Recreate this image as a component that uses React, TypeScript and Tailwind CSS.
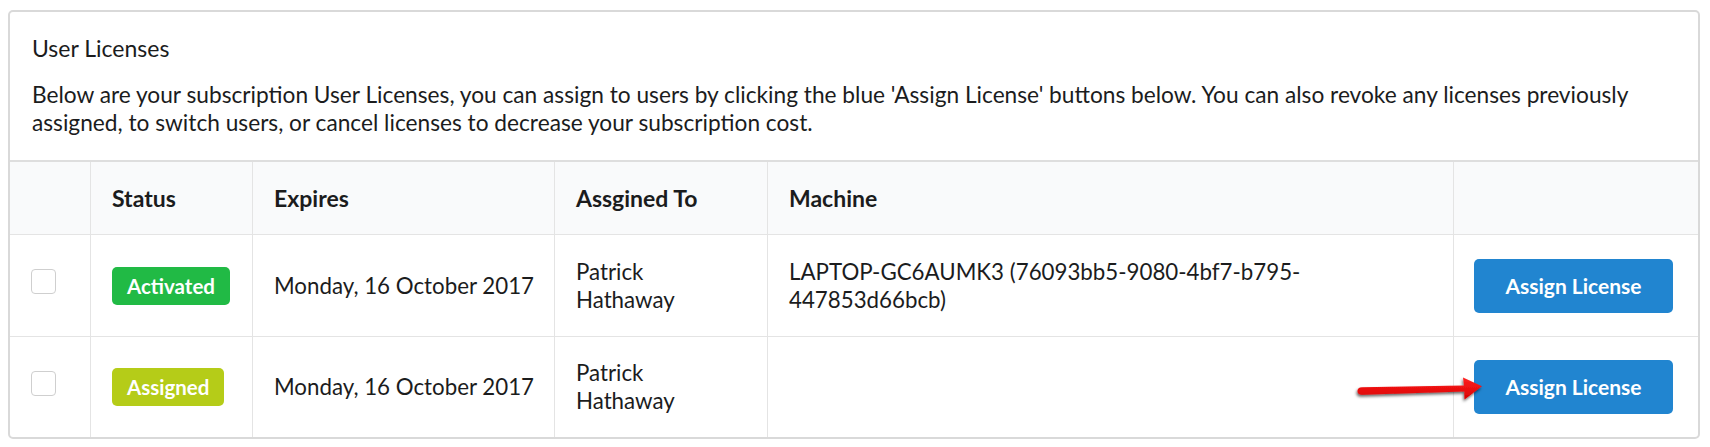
import React from 'react';

const rows = [
  {
    status: 'Activated',
    badge: 'bg-[#21ba45]',
    expires: 'Monday, 16 October 2017',
    user: 'Patrick Hathaway',
    machine: 'LAPTOP-GC6AUMK3 (76093bb5-9080-4bf7-b795-447853d66bcb)',
  },
  {
    status: 'Assigned',
    badge: 'bg-[#b5cc18]',
    expires: 'Monday, 16 October 2017',
    user: 'Patrick Hathaway',
    machine: '',
  },
];

function Checkbox() {
  return <div className="mb-[8px] h-[25px] w-[25px] rounded-[4px] border border-[#cfcfcf] bg-white" />;
}

function AssignButton() {
  return (
    <button className="h-[54px] w-[199px] rounded-[5px] bg-[#2185d0] font-['Lato',sans-serif] text-[21px] font-bold text-white">
      Assign License
    </button>
  );
}

// red annotation arrow drawn over the table
function Arrow() {
  return (
    <svg className="absolute left-[1353px] top-[372px]" width="140" height="34" viewBox="0 0 140 34">
      <defs>
        <linearGradient id="red" x1="0" y1="0" x2="0" y2="1">
          <stop offset="0" stopColor="#ff2020" />
          <stop offset="1" stopColor="#d80000" />
        </linearGradient>
        <filter id="shadow" x="-10%" y="-50%" width="120%" height="200%">
          <feDropShadow dx="-1" dy="2" stdDeviation="1.5" floodColor="#000" floodOpacity="0.6" />
        </filter>
      </defs>
      <path
        d="M9 15.2 L111 13.4 L110 5.5 L129 14.2 L111.5 27.5 L111.3 19.6 L9 22.8 Q4.5 22.8 4.5 19 Q4.5 15.2 9 15.2 Z"
        fill="url(#red)"
        filter="url(#shadow)"
      />
    </svg>
  );
}

export default function App() {
  const head = 'flex items-center border-r border-b border-[#e4e4e4] bg-[#f9fafb] px-[21px] text-[23px] font-bold';
  const cell = 'flex items-center border-r border-[#e4e4e4] px-[21px] text-[22.3px] leading-[28px]';

  return (
    <div className="relative h-[447px] w-full bg-white pl-[8px] pt-[10px] font-['Lato',sans-serif] text-[#1b1c1d]">
      <div className="w-[1692px] overflow-hidden rounded-[5px] border-2 border-[#d9d9d9]">
        <div className="px-[22px] pt-[22px] pb-[23px]">
          <h2 className="text-[23px] leading-[28px]">User Licenses</h2>
          <p className="mt-[19px] text-[22.7px] leading-[28px]">
            Below are your subscription User Licenses, you can assign to users by clicking the blue 'Assign License'
            buttons below. You can also revoke any licenses previously assigned, to switch users, or cancel licenses to
            decrease your subscription cost.
          </p>
        </div>
        <div className="grid grid-cols-[81px_162px_302px_213px_686px_1fr] border-t-2 border-[#dedede]">
          <div className={`${head} h-[73px]`} />
          <div className={head}>Status</div>
          <div className={head}>Expires</div>
          <div className={head}>Assgined To</div>
          <div className={head}>Machine</div>
          <div className={`${head} border-r-0`} />

          {rows.map((row, i) => {
            const line = i === 0 ? 'h-[102px] border-b' : 'h-[100px]';
            return (
              <React.Fragment key={i}>
                <div className={`${cell} ${line} pl-[21px]`}>
                  <Checkbox />
                </div>
                <div className={`${cell} ${line}`}>
                  <span
                    className={`${row.badge} inline-flex h-[38px] items-center rounded-[5px] px-[15px] text-[20.5px] font-bold text-white`}
                  >
                    {row.status}
                  </span>
                </div>
                <div className={`${cell} ${line} whitespace-nowrap`}>{row.expires}</div>
                <div className={`${cell} ${line}`}>
                  <span className="max-w-[120px]">{row.user}</span>
                </div>
                <div className={`${cell} ${line}`}>{row.machine}</div>
                <div className={`${cell} ${line} border-r-0 pl-[20px]`}>
                  <AssignButton />
                </div>
              </React.Fragment>
            );
          })}
        </div>
      </div>
      <Arrow />
    </div>
  );
}
